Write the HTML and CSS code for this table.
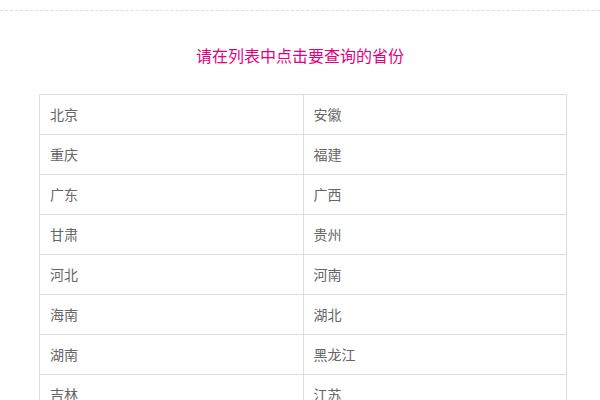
FILE: index.html
```html
<!DOCTYPE html>
<html lang="zh-CN">
<head>
<meta charset="utf-8">
<link rel="stylesheet" href="styles.css">
</head>
<body>
<div class="topline"></div>
<h1 class="title">请在列表中点击要查询的省份</h1>
<table class="list">
<tr><td>北京</td><td>安徽</td></tr>
<tr><td>重庆</td><td>福建</td></tr>
<tr><td>广东</td><td>广西</td></tr>
<tr><td>甘肃</td><td>贵州</td></tr>
<tr><td>河北</td><td>河南</td></tr>
<tr><td>海南</td><td>湖北</td></tr>
<tr><td>湖南</td><td>黑龙江</td></tr>
<tr><td>吉林</td><td>江苏</td></tr>
</table>
</body>
</html>
```
FILE: styles.css
```css
html, body {
  margin: 0;
  padding: 0;
  background: #fff;
  font-family: "Noto Sans CJK SC", "Noto Sans", sans-serif;
}
.topline {
  margin-top: 10px;
  border-top: 1px dashed #ddd;
}
.title {
  margin: 35px 0 0;
  height: 19px;
  line-height: 19px;
  text-align: center;
  font-size: 16px;
  font-weight: normal;
  color: #e4007f;
}
.list {
  margin: 29px 0 0 39px;
  width: 528px;
  border-collapse: collapse;
  table-layout: fixed;
}
.list td {
  border: 1px solid #ddd;
  height: 38px;
  padding: 0 0 1px 10px;
  font-size: 14px;
  color: #666;
  vertical-align: middle;
}
```
